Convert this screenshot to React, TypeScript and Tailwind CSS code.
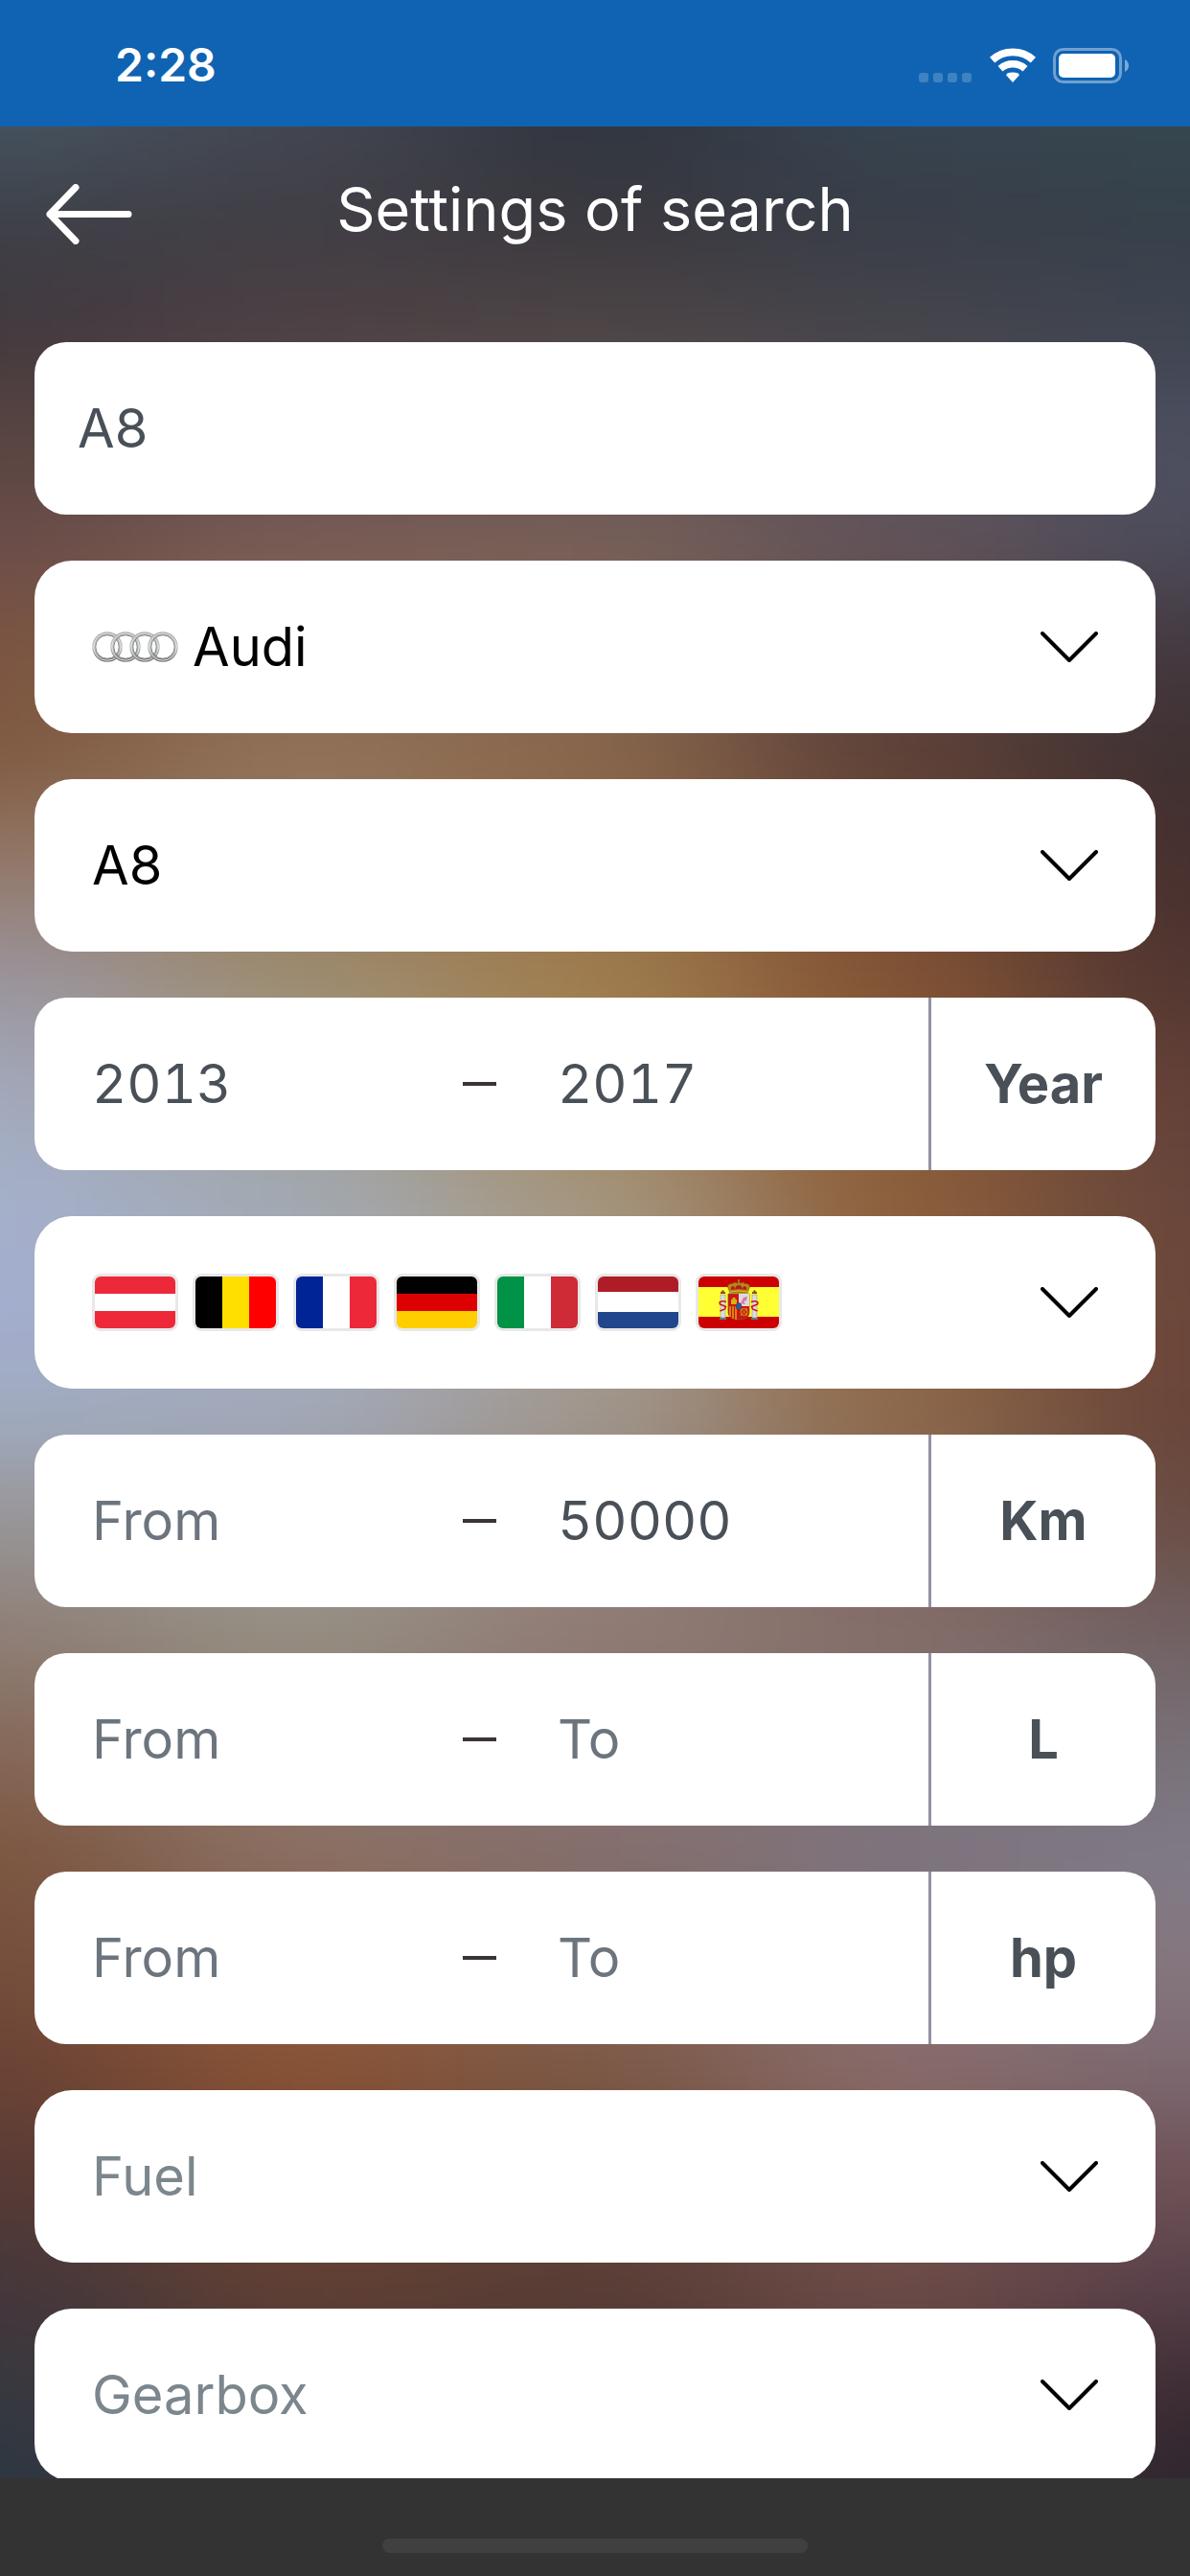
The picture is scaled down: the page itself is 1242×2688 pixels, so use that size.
import React, { useState } from 'react';

interface Option {
  value: string;
  label: string;
}

interface Stripe {
  color: string;
  size: number;
}

interface Country {
  name: string;
  direction: 'row' | 'column';
  stripes: Stripe[];
}

interface RangeFieldProps {
  name: string;
  unit: string;
  from?: string;
  to?: string;
}

interface SelectFieldProps {
  label: string;
  options: Option[];
  initial?: string;
  icon?: React.ReactNode;
}

// Flags are 84x54, stripe sizes add up to the full width or height
const countries: Country[] = [
  { name: 'Austria', direction: 'column', stripes: [{ color: '#ed2939', size: 18 }, { color: '#ffffff', size: 18 }, { color: '#ed2939', size: 18 }] },
  { name: 'Belgium', direction: 'row', stripes: [{ color: '#000000', size: 28 }, { color: '#ffdf00', size: 28 }, { color: '#ff0000', size: 28 }] },
  { name: 'France', direction: 'row', stripes: [{ color: '#002496', size: 28 }, { color: '#ffffff', size: 28 }, { color: '#ed2939', size: 28 }] },
  { name: 'Germany', direction: 'column', stripes: [{ color: '#000000', size: 18 }, { color: '#dd0000', size: 18 }, { color: '#ffce00', size: 18 }] },
  { name: 'Italy', direction: 'row', stripes: [{ color: '#009246', size: 28 }, { color: '#ffffff', size: 28 }, { color: '#ce2b37', size: 28 }] },
  { name: 'Netherlands', direction: 'column', stripes: [{ color: '#ae1c28', size: 16 }, { color: '#ffffff', size: 21 }, { color: '#21468b', size: 17 }] },
  { name: 'Spain', direction: 'column', stripes: [{ color: '#cc0000', size: 11 }, { color: '#ffff33', size: 31 }, { color: '#cc0000', size: 12 }] },
];

// Backdrop: [y, colors from left to right]
const backdropColumns = [0, 310, 620, 930, 1242];
const backdropRows: [number, string[]][] = [
  [0, ['#465460', '#434752', '#30353f', '#374450', '#36474f']],
  [90, ['#3d4048', '#413e45', '#3a383e', '#383d48', '#364049']],
  [208, ['#42383f', '#4c4044', '#4c4445', '#45444b', '#3e4450']],
  [330, ['#57443f', '#634e4c', '#665552', '#59505a', '#4c4f60']],
  [428, ['#6a4c49', '#785b56', '#775f59', '#62545b', '#4c4c5b']],
  [545, ['#7b5440', '#876850', '#826753', '#5f463e', '#423840']],
  [658, ['#805a41', '#92735a', '#88654b', '#5c4038', '#3e3031']],
  [770, ['#93796b', '#97795c', '#94704a', '#754a30', '#452f2f']],
  [885, ['#9a939d', '#9c8b6e', '#a07d4e', '#825335', '#503531']],
  [1000, ['#a2a8ba', '#a3a094', '#a28457', '#895937', '#613f38']],
  [1113, ['#a4b0ca', '#a2a9b2', '#a5967e', '#8c5f3a', '#67453b']],
  [1227, ['#a3add0', '#a2a9b8', '#a69b8c', '#916241', '#6a463b']],
  [1341, ['#a0abc0', '#a2aabc', '#a1988f', '#8e6a4a', '#684338']],
  [1455, ['#989597', '#9a9693', '#95857d', '#86685a', '#694c44']],
  [1570, ['#8e7f77', '#969083', '#907b74', '#846e6b', '#706062']],
  [1684, ['#86695a', '#8d7a6e', '#89736d', '#80706f', '#777077']],
  [1798, ['#7c5640', '#8b7064', '#846f6e', '#7d7480', '#7f7a88']],
  [1912, ['#754e3c', '#8a6149', '#836459', '#806e72', '#857880']],
  [2028, ['#6a4234', '#8a5234', '#7c5844', '#8a6c6b', '#7c6870']],
  [2142, ['#553a35', '#704632', '#674739', '#77554f', '#6c5156']],
  [2256, ['#43363b', '#613f34', '#573c35', '#6d4b47', '#58404a']],
  [2360, ['#373840', '#4c3a36', '#4c3834', '#5a403f', '#3c2b33']],
  [2454, ['#2c3742', '#403634', '#443430', '#4a3636', '#2e262f']],
];

const Backdrop = () => (
  <svg className="absolute inset-0 w-full h-full" viewBox="0 0 1242 2454" preserveAspectRatio="none" aria-hidden="true">
    <defs>
      <filter id="mesh" filterUnits="userSpaceOnUse" x="-400" y="-200" width="2042" height="2854" colorInterpolationFilters="sRGB">
        <feGaussianBlur stdDeviation="100 46" />
      </filter>
    </defs>
    <g filter="url(#mesh)">
      {backdropRows.map(([y, colors], row) => {
        const top = row === 0 ? -400 : (backdropRows[row - 1][0] + y) / 2;
        const bottom = row === backdropRows.length - 1 ? 2900 : (backdropRows[row + 1][0] + y) / 2;
        return colors.map((color, col) => {
          const left = col === 0 ? -600 : (backdropColumns[col - 1] + backdropColumns[col]) / 2;
          const right = col === colors.length - 1 ? 1900 : (backdropColumns[col + 1] + backdropColumns[col]) / 2;
          return <rect key={`${row}-${col}`} x={left} y={top} width={right - left + 1} height={bottom - top + 1} fill={color} />;
        });
      })}
    </g>
  </svg>
);

const StatusBar = () => (
  <div className="shrink-0 h-[132px] pt-1 bg-[#0f63b2] text-white flex items-center justify-between pl-[120px] pr-[63px]">
    <span className="text-5xl font-semibold">2:28</span>
    <div className="flex items-center">
      <svg className="mr-4" width="58" height="36" viewBox="0 0 58 36" fill="#fff" fillOpacity="0.2" aria-hidden="true">
        <rect x="0" y="26" width="10" height="10" rx="3" />
        <rect x="15" y="26" width="10" height="10" rx="3" />
        <rect x="30" y="26" width="10" height="10" rx="3" />
        <rect x="45" y="26" width="10" height="10" rx="3" />
      </svg>
      <svg className="mr-[18px]" width="48" height="36" viewBox="0 0 48 36" fill="none" stroke="#fff" aria-label="Wi-Fi">
        <path d="M2.6 12.6A31.8 31.8 0 0 1 45.4 12.6" strokeWidth="7.8" />
        <path d="M11 21.8A19.4 19.4 0 0 1 37 21.8" strokeWidth="7.4" />
        <path d="M24 36L17.2 28.6Q17.2 25.4 24 25.4T30.8 28.6Z" fill="#fff" stroke="none" />
      </svg>
      <svg width="80" height="37" viewBox="0 0 80 37" aria-label="Battery">
        <rect x="1.5" y="1.5" width="69" height="34" rx="9" fill="none" stroke="#fff" strokeOpacity="0.4" strokeWidth="3" />
        <rect x="6" y="6" width="59" height="25" rx="5" fill="#fff" />
        <path d="M75 12C78 13.5 79 16 79 18.5S78 23.5 75 25Z" fill="#fff" fillOpacity="0.45" />
      </svg>
    </div>
  </div>
);

const Chevron = () => (
  <svg className="shrink-0 pointer-events-none" width="60" height="32" viewBox="0 0 60 32" fill="none" stroke="#000" strokeWidth="4" strokeLinecap="round" strokeLinejoin="round" aria-hidden="true">
    <path d="M2 2L30 30L58 2" />
  </svg>
);

const AudiLogo = () => (
  <svg className="shrink-0 mr-[15px]" width="90" height="32" viewBox="0 0 90 32" fill="none" aria-hidden="true">
    <defs>
      <linearGradient id="chrome" x1="0" y1="0" x2="0" y2="1">
        <stop offset="0" stopColor="#a9acae" />
        <stop offset="0.5" stopColor="#c4c6c7" />
        <stop offset="1" stopColor="#77797b" />
      </linearGradient>
    </defs>
    {[16, 35, 55, 74].map((cx) => (
      <g key={cx}>
        <circle cx={cx} cy="16" r="14" stroke="url(#chrome)" strokeWidth="3.5" />
        <circle cx={cx} cy="16" r="12.2" stroke="#6f7274" strokeWidth="0.8" />
        <circle cx={cx} cy="16" r="14.2" stroke="#e6e8e8" strokeWidth="0.9" />
      </g>
    ))}
  </svg>
);

const SpanishArms = () => (
  <g>
    <rect x="23" y="19" width="5" height="24" fill="#dcdcdc" stroke="#8a8a8a" strokeWidth="0.5" />
    <rect x="56" y="19" width="5" height="24" fill="#dcdcdc" stroke="#8a8a8a" strokeWidth="0.5" />
    <path d="M23 18h5v-2h-5zM56 18h5v-2h-5z" fill="#8a5a14" />
    <path d="M24.5 16h2v-1.5h-2zM57.5 16h2v-1.5h-2z" fill="#a8181c" />
    <path d="M22 43h7v2h-7zM55 43h7v2h-7z" fill="#5c7c8c" />
    <path d="M29 26.5q-4-1.500-7 .5l.5 2l6 2.500l-1 2.500l-5 2M55 26.500q4-1.500 7 .5l-.5 2l-6 2.500l1 2.500l5 2" fill="none" stroke="#cc1418" strokeWidth="1.5" />
    <path d="M31 18h22v20q0 6-11 7q-11-1-11-7z" fill="#cc1418" stroke="#7c5c30" strokeWidth="0.8" />
    <path d="M42 18h11v13h-11z" fill="#dfd8dc" />
    <path d="M34 29h6v-5h-1.5v-2h-3v2h-1.5z" fill="#d8b010" />
    <path d="M44 28l3-6l4-1l-1 4l-3 1l2 3z" fill="#c8589a" fillOpacity="0.75" />
    <path d="M33 31v11M36 31v13M39 31v14" stroke="#d8b010" strokeWidth="1.4" />
    <circle cx="47.5" cy="37" r="3.6" fill="none" stroke="#d8a010" strokeWidth="1" />
    <path d="M44 33l7 8M51 33l-7 8" stroke="#d8a010" strokeWidth="0.8" />
    <ellipse cx="42" cy="31" rx="3" ry="3.5" fill="#17639c" stroke="#8c2830" strokeWidth="0.7" />
    <path d="M33 17l-2.5-6q0-4 5-3.5l2-1.5l3.5 1v-4h2v4l3.5-1l2 1.5q5-.5 5 3.5l-2.5 6z" fill="#b48a18" stroke="#7c4c14" strokeWidth="0.6" />
    <path d="M34 14q-1-4 3-4l1 3q1-4 4-4t4 4l1-3q4 0 3 4q-8-1.5-16 0z" fill="#b81c1c" />
    <path d="M33 16q9-2 18 0" fill="none" stroke="#d8b830" strokeWidth="1" />
  </g>
);

const Flag: React.FC<{ country: Country }> = ({ country }) => {
  let offset = 0;

  return (
    <span className="block shrink-0 border-3 border-[#e8e8e8] rounded-[9px] overflow-hidden">
      <svg className="block" width="84" height="54" viewBox="0 0 84 54" role="img" aria-label={country.name}>
        {country.stripes.map((stripe) => {
          const start = offset;
          offset += stripe.size;
          return country.direction === 'row'
            ? <rect key={start} x={start} y="0" width={stripe.size} height="54" fill={stripe.color} />
            : <rect key={start} x="0" y={start} width="84" height={stripe.size} fill={stripe.color} />;
        })}
        {country.name === 'Spain' && <SpanishArms />}
      </svg>
    </span>
  );
};

const SelectField: React.FC<SelectFieldProps> = ({ label, options, initial = '', icon }) => {
  const [value, setValue] = useState(initial);

  return (
    <label className="h-[180px] px-[60px] bg-white rounded-[39px] flex items-center">
      {icon}
      <select
        aria-label={label}
        className={`appearance-none outline-none bg-transparent flex-1 min-w-0 h-full ${value ? 'text-black' : 'text-[#7c868d]'}`}
        value={value}
        onChange={(e) => setValue(e.target.value)}
      >
        {!initial && <option value="">{label}</option>}
        {options.map((option) => <option key={option.value} value={option.value}>{option.label}</option>)}
      </select>
      <Chevron />
    </label>
  );
};

const RangeField: React.FC<RangeFieldProps> = ({ name, unit, from = '', to = '' }) => {
  const [min, setMin] = useState(from);
  const [max, setMax] = useState(to);

  return (
    <div className="h-[180px] bg-white rounded-[33px] flex overflow-hidden text-[#495057] tabular-nums">
      <div className="flex-1 min-w-0 flex items-center">
        <input
          type="text"
          inputMode="numeric"
          aria-label={`${name} from`}
          placeholder="From"
          className="flex-1 min-w-0 h-full pl-[60px] outline-none placeholder:text-[#6c757d]"
          value={min}
          onChange={(e) => setMin(e.target.value)}
        />
        <span className="shrink-0 w-[35px] h-1 bg-[#3a3434]" />
        <input
          type="text"
          inputMode="numeric"
          aria-label={`${name} to`}
          placeholder="To"
          className="flex-1 min-w-0 h-full pl-16 outline-none placeholder:text-[#6c757d]"
          value={max}
          onChange={(e) => setMax(e.target.value)}
        />
      </div>
      <div className="shrink-0 w-[237px] border-l-3 border-[#9192a3] font-bold flex items-center justify-center">{unit}</div>
    </div>
  );
};

const App: React.FC = () => {
  const [query, setQuery] = useState('A8');

  return (
    <div className="h-screen flex flex-col font-['Inter','Liberation_Sans',sans-serif]">
      <StatusBar />

      <main className="relative flex-1 min-h-0 overflow-hidden">
        <Backdrop />
        <div className="relative h-full overflow-y-auto [scrollbar-width:none]">
          <header className="grid grid-cols-[90px_1fr_90px] items-center px-12 pt-[46px] pb-[99px]">
            <button type="button" aria-label="Back" className="pt-2.5">
              <svg width="90" height="63" viewBox="0 0 90 63" fill="none" stroke="#fff" strokeWidth="7" strokeLinecap="round" strokeLinejoin="round">
                <path d="M31 3.5L4 31.5L31 59.5M4 31.5H86" />
              </svg>
            </button>
            <h1 className="text-[63px] leading-[80px] text-white text-center">Settings of search</h1>
          </header>

          <form className="flex flex-col gap-12 px-9 text-[56px]" onSubmit={(e) => e.preventDefault()}>
            <input
              type="text"
              aria-label="Search"
              className="w-full h-[180px] px-[45px] bg-white rounded-[33px] outline-none text-[#495057]"
              value={query}
              onChange={(e) => setQuery(e.target.value)}
            />
            <SelectField label="Brand" initial="audi" options={[{ value: 'audi', label: 'Audi' }]} icon={<AudiLogo />} />
            <SelectField label="Model" initial="a8" options={[{ value: 'a8', label: 'A8' }]} />
            <RangeField name="Year" unit="Year" from="2013" to="2017" />
            <button type="button" aria-haspopup="listbox" aria-label="Countries" className="h-[180px] px-[60px] bg-white rounded-[39px] flex items-center justify-between">
              <span className="flex gap-[15px]">
                {countries.map((country) => <Flag key={country.name} country={country} />)}
              </span>
              <Chevron />
            </button>
            <RangeField name="Mileage" unit="Km" to="50000" />
            <RangeField name="Engine volume" unit="L" />
            <RangeField name="Power" unit="hp" />
            <SelectField label="Fuel" options={[{ value: 'petrol', label: 'Petrol' }, { value: 'diesel', label: 'Diesel' }]} />
            <SelectField label="Gearbox" options={[{ value: 'manual', label: 'Manual' }, { value: 'automatic', label: 'Automatic' }]} />
          </form>
        </div>
      </main>

      <div className="shrink-0 h-[102px] bg-[#333333] flex justify-center items-end pb-6">
        <div className="w-[444px] h-[15px] rounded-full bg-[#404040]" />
      </div>
    </div>
  );
};

export default App;
